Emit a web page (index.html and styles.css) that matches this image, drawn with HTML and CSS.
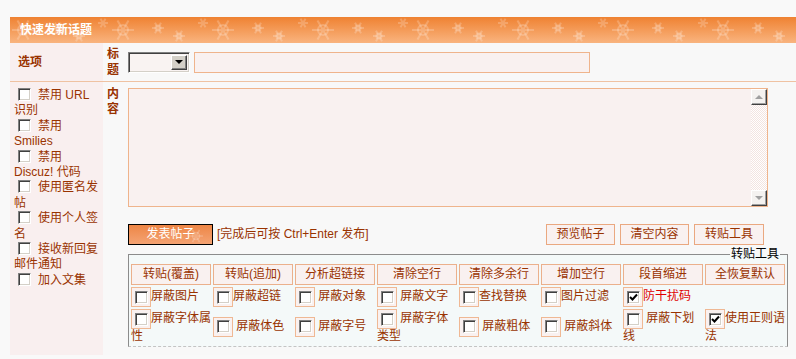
FILE: index.html
```html
<!DOCTYPE html>
<html lang="zh-CN">
<head>
<meta charset="utf-8">
<title>快速发新话题</title>
<link rel="stylesheet" href="styles.css">
</head>
<body>
<div class="panel">
  <div class="hd">快速发新话题</div>
  <div class="form">
    <div class="r1 opt-head">选项</div>
    <div class="r1 lbl lbl2">标<br>题</div>
    <div class="r1 title-row">
      <div class="sel"><span class="sel-btn"><span class="tri-down"></span></span></div>
      <input class="subject" type="text">
    </div>

    <div class="opts">
      <div class="opt"><span class="chk"></span>禁用 URL 识别</div>
      <div class="opt"><span class="chk"></span>禁用 Smilies</div>
      <div class="opt"><span class="chk"></span>禁用 Discuz! 代码</div>
      <div class="opt"><span class="chk"></span>使用匿名发帖</div>
      <div class="opt"><span class="chk"></span>使用个人签名</div>
      <div class="opt"><span class="chk"></span>接收新回复邮件通知</div>
      <div class="opt"><span class="chk"></span>加入文集</div>
    </div>
    <div class="lbl lbl2 lbl-content">内<br>容</div>
    <div class="editor">
      <div class="ta-wrap">
        <textarea class="ta"></textarea>
        <div class="sb">
          <span class="sb-btn"><span class="sb-up"></span></span>
          <span class="sb-track"></span>
          <span class="sb-btn"><span class="sb-down"></span></span>
        </div>
      </div>
      <div class="actions">
        <span class="send">发表帖子</span>
        <span class="hint">[完成后可按 Ctrl+Enter 发布]</span>
        <div class="abtns">
          <span class="abtn w69">预览帖子</span>
          <span class="abtn w69">清空内容</span>
          <span class="abtn w70">转贴工具</span>
        </div>
      </div>
      <fieldset class="tools">
        <legend>转贴工具</legend>
        <div class="tgrid">
          <span class="tb">转贴(覆盖)</span>
          <span class="tb">转贴(追加)</span>
          <span class="tb">分析超链接</span>
          <span class="tb">清除空行</span>
          <span class="tb">清除多余行</span>
          <span class="tb">增加空行</span>
          <span class="tb">段首缩进</span>
          <span class="tb">全恢复默认</span>

          <div class="tc"><span class="cbx"><span class="chk"></span></span>屏蔽图片</div>
          <div class="tc"><span class="cbx"><span class="chk"></span></span>屏蔽超链</div>
          <div class="tc"><span class="cbx"><span class="chk"></span></span> 屏蔽对象</div>
          <div class="tc"><span class="cbx"><span class="chk"></span></span> 屏蔽文字</div>
          <div class="tc"><span class="cbx"><span class="chk"></span></span>查找替换</div>
          <div class="tc"><span class="cbx"><span class="chk"></span></span>图片过滤</div>
          <div class="tc red"><span class="cbx"><span class="chk"><svg class="tick" width="9" height="9" viewBox="0 0 9 9"><path d="M1 4L3.5 6.5L8 1.5" fill="none" stroke="#000" stroke-width="2"/></svg></span></span>防干扰码</div>
          <div class="tc"></div>

          <div class="tc"><span class="cbx"><span class="chk"></span></span>屏蔽字体属性</div>
          <div class="tc"><span class="cbx"><span class="chk"></span></span> 屏蔽体色</div>
          <div class="tc"><span class="cbx"><span class="chk"></span></span> 屏蔽字号</div>
          <div class="tc"><span class="cbx"><span class="chk"></span></span> 屏蔽字体类型</div>
          <div class="tc"><span class="cbx"><span class="chk"></span></span> 屏蔽粗体</div>
          <div class="tc"><span class="cbx"><span class="chk"></span></span> 屏蔽斜体</div>
          <div class="tc"><span class="cbx"><span class="chk"></span></span> 屏蔽下划线</div>
          <div class="tc"><span class="cbx"><span class="chk"><svg class="tick" width="9" height="9" viewBox="0 0 9 9"><path d="M1 4L3.5 6.5L8 1.5" fill="none" stroke="#000" stroke-width="2"/></svg></span></span>使用正则语法</div>
        </div>
      </fieldset>
    </div>
  </div>
</div>
</body>
</html>
```

FILE: styles.css
```css
html {
  background: #f9f9f9;
}
body {
  margin: 0;
  padding: 17px 0 0 10px;
  font-family: "Liberation Sans", "Noto Sans CJK SC", sans-serif;
  font-size: 12px;
  line-height: 15px;
  color: #993300;
  overflow: hidden;
}
.panel {
  width: 786px;
}
.hd {
  height: 26px;
  line-height: 26px;
  padding-left: 10px;
  color: #fff;
  font-weight: bold;
  background:
    url("data:image/svg+xml,%3Csvg xmlns='http://www.w3.org/2000/svg' width='100' height='26'%3E%3Cg fill='none' stroke='%23fff' stroke-opacity='.2' stroke-width='2'%3E%3Cpath d='M12 13H34M17.5 3.5L28.5 22.5M17.5 22.5L28.5 3.5'/%3E%3Ccircle cx='23' cy='13' r='5'/%3E%3Cpath d='M52 11H64M55 5.8L61 16.2M55 16.2L61 5.8'/%3E%3Ccircle cx='58' cy='11' r='2.5'/%3E%3Cpath d='M73 19H85M76 13.8L82 24.2M76 24.2L82 13.8'/%3E%3Ccircle cx='79' cy='19' r='2.5'/%3E%3Cpath d='M-2 6H8M0.5 1.7L5.5 10.3M0.5 10.3L5.5 1.7'/%3E%3Cpath d='M98 6H108M100.5 1.7L105.5 10.3M100.5 10.3L105.5 1.7'/%3E%3C/g%3E%3C/svg%3E") -10px 0 repeat-x,
    linear-gradient(#ef8232, #f9b47f);
}
.form {
  display: grid;
  grid-template-columns: 93px 25px 1fr;
  background: #f8f8f8;
}
.r1 {
  height: 38px;
  border-bottom: 1px solid #efc2a2;
  display: flex;
  align-items: center;
}
.opt-head {
  background: #f9efef;
  padding-left: 8px;
  font-weight: bold;
}
.lbl {
  font-weight: bold;
  padding-left: 4px;
}
.lbl2 {
  line-height: 16px;
}
.lbl-content {
  padding-top: 5px;
  line-height: 15px;
}
.title-row {
  gap: 4px;
}
.sel {
  width: 62px;
  height: 21px;
  box-sizing: border-box;
  border: 1px solid;
  border-color: #808080 #ffffff #ffffff #808080;
  box-shadow: inset 1px 1px #404040, inset -1px -1px #d4d0c8;
  background: #f9f3f2;
  display: flex;
  justify-content: flex-end;
  padding: 2px;
}
.sel-btn {
  width: 16px;
  height: 15px;
  box-sizing: border-box;
  background: #d4d0c8;
  border: 1px solid;
  border-color: #ffffff #404040 #404040 #ffffff;
  box-shadow: inset -1px -1px #808080;
  display: flex;
  align-items: center;
  justify-content: center;
}
.tri-down {
  width: 0;
  height: 0;
  border-left: 4px solid transparent;
  border-right: 4px solid transparent;
  border-top: 4px solid #000;
}
.subject {
  width: 396px;
  height: 21px;
  box-sizing: border-box;
  margin: 0;
  border: 1px solid #efb48c;
  background: #f9f1f0;
  outline: none;
}
.opts {
  background: #f9efef;
  padding: 6px 3px 0 4px;
  line-height: 15.4px;
}
.chk {
  display: inline-block;
  width: 13px;
  height: 13px;
  box-sizing: border-box;
  border: 1px solid;
  border-color: #808080 #ffffff #ffffff #808080;
  box-shadow: inset 1px 1px #404040, inset -1px -1px #d4d0c8;
  background: #fff;
  vertical-align: -2px;
  position: relative;
}
.opt .chk {
  margin: 0 7px 0 4px;
}
.tick {
  position: absolute;
  left: 1px;
  top: 1px;
}
.editor {
  padding: 6px 0 8px;
}
.ta-wrap {
  width: 640px;
  height: 119px;
  box-sizing: border-box;
  border: 1px solid #efb48c;
  background: #f9f1f0;
  display: flex;
}
.ta {
  flex: 1;
  margin: 0;
  border: 0;
  padding: 2px;
  background: transparent;
  resize: none;
  outline: none;
}
.sb {
  width: 16px;
  display: flex;
  flex-direction: column;
}
.sb-btn {
  height: 16px;
  box-sizing: border-box;
  background: #f4f2f0;
  border: 1px solid;
  border-color: #ffffff #404040 #404040 #ffffff;
  box-shadow: inset -1px -1px #a0a0a0;
  display: flex;
  align-items: center;
  justify-content: center;
}
.sb-track {
  flex: 1;
  background: repeating-conic-gradient(#ffffff 0 25%, #f3e4e0 0 50%) 0 0 / 2px 2px;
}
.sb-up {
  width: 0;
  height: 0;
  border-left: 4px solid transparent;
  border-right: 4px solid transparent;
  border-bottom: 4px solid #a0a0a0;
}
.sb-down {
  width: 0;
  height: 0;
  border-left: 4px solid transparent;
  border-right: 4px solid transparent;
  border-top: 4px solid #a0a0a0;
}
.actions {
  display: flex;
  align-items: center;
  width: 636px;
  margin-top: 17px;
}
.send {
  width: 85px;
  height: 21px;
  box-sizing: border-box;
  border: 1px solid #000;
  color: #fff;
  background:
    url("data:image/svg+xml,%3Csvg xmlns='http://www.w3.org/2000/svg' width='30' height='19'%3E%3Cg fill='none' stroke='%23fff' stroke-opacity='.2' stroke-width='1.6'%3E%3Cpath d='M8 11H22M11.5 5L18.5 17M11.5 17L18.5 5'/%3E%3Ccircle cx='15' cy='11' r='3.5'/%3E%3C/g%3E%3C/svg%3E") 52px 0 no-repeat,
    linear-gradient(#ee8646, #f4a373);
  display: flex;
  align-items: center;
  justify-content: center;
}
.hint {
  margin-left: 4px;
}
.abtns {
  margin-left: auto;
  display: flex;
  gap: 5px;
}
.abtn {
  height: 21px;
  box-sizing: border-box;
  border: 1px solid #eaa880;
  background: #f9f1f0;
  display: flex;
  align-items: center;
  justify-content: center;
}
.w69 { width: 69px; }
.w70 { width: 70px; }
.tools {
  margin: 2px 0 0;
  width: 660px;
  box-sizing: border-box;
  padding: 3px 2px 2px;
  border: 1px solid #8c8c8c;
  border-bottom: 1px dashed #c4c4c4;
  background: #f4f9f9;
  min-width: 0;
}
.tools legend {
  margin-left: auto;
  margin-right: 5px;
  padding: 0 1px;
  color: #000;
  line-height: 14px;
}
.tgrid {
  display: grid;
  grid-template-columns: repeat(8, 80px);
  column-gap: 2px;
  row-gap: 2px;
}
.tb {
  height: 21px;
  box-sizing: border-box;
  border: 1px solid #ebb08c;
  background: #f9f1f0;
  display: flex;
  align-items: center;
  justify-content: center;
}
.tc {
  align-self: center;
  line-height: 15px;
}
.red {
  color: #e00000;
}
.cbx {
  display: inline-flex;
  width: 20px;
  height: 20px;
  box-sizing: border-box;
  border: 1px solid #efb894;
  background: #f9f1f0;
  align-items: center;
  justify-content: center;
  vertical-align: middle;
}
.cbx .chk {
  vertical-align: top;
}
```
